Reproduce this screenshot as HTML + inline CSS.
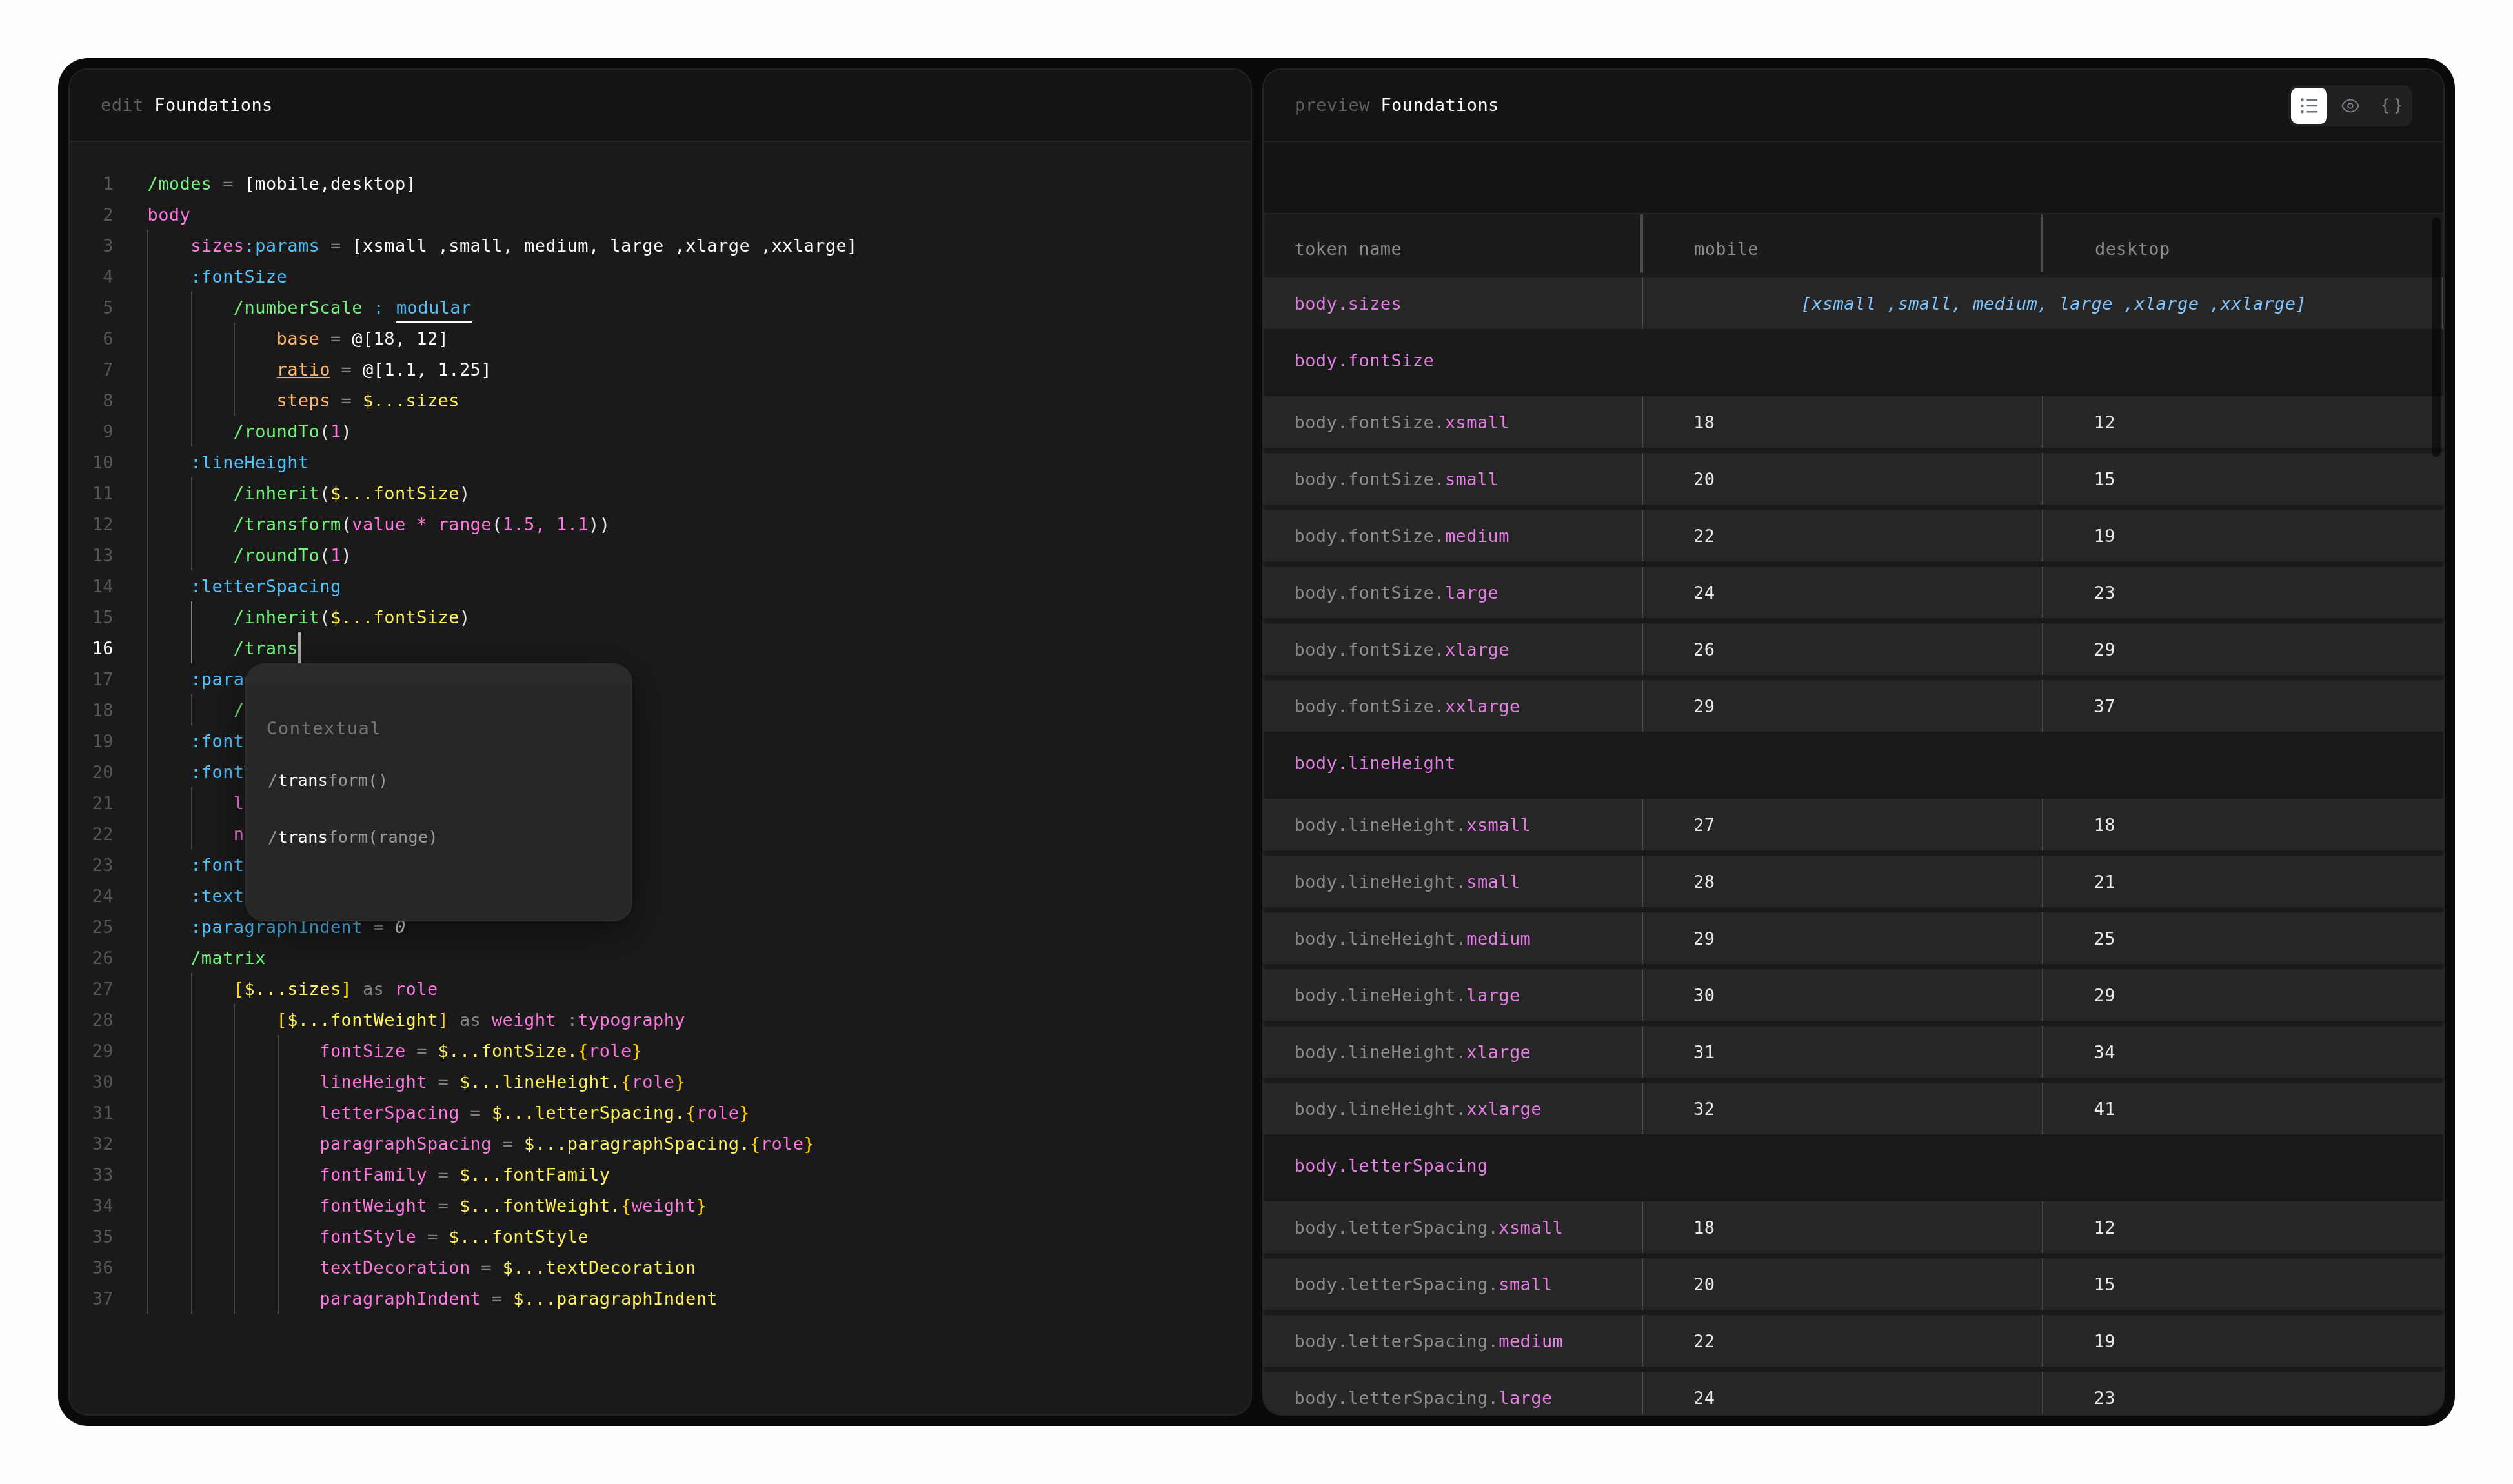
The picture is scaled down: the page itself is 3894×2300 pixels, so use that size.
<!DOCTYPE html>
<html lang="en"><head><meta charset="utf-8"><title>Foundations</title>
<style>
html,body{margin:0;padding:0}
body{width:3894px;height:2300px;background:#fefefe;overflow:hidden;position:relative;font-family:"DejaVu Sans Mono", "Liberation Mono", monospace;font-size:27.0px;letter-spacing:0.415px;line-height:48px;color:#fff;-webkit-font-smoothing:antialiased}
i{font-style:normal}
.frame{position:absolute;left:90px;top:90px;width:3714px;height:2120px;background:#0a0a0a;border-radius:46px;box-shadow:0 0 60px 10px rgba(0,0,0,.008)}
.panel{position:absolute;top:106px;height:2088px;box-sizing:border-box;border:2px solid #242424;border-radius:30px;overflow:hidden;background:#1a1a1a;will-change:transform}
.left{left:106px;width:1834px}
.right{left:1956px;width:1832px}
.hdr{position:absolute;left:0;top:0;right:0;height:110px;background:#141414;border-bottom:2px solid #242424}
.ttl{position:absolute;left:48px;top:31px;white-space:pre;color:#5f5f5f}
.ttl b{font-weight:normal;color:#fff}
.ln{position:absolute;left:0;right:0;height:48px}
.no{position:absolute;left:0;top:1px;width:68px;text-align:right;color:#555}
.no.act{color:#fff}
.cd{position:absolute;top:1px;white-space:pre}
.gd{position:absolute;top:0;width:2px;height:48px;background:#464646}
.ga{background:#858585}
.cur{position:absolute;left:354px;top:0;width:4px;height:48px;background:#b0b0b0}
.g{color:#72f47c}.p{color:#fc78e0}.b{color:#50c2fc}.o{color:#ffb46a}.y{color:#fdf05a}.w{color:#fff}.e{color:#828282}.a{color:#ffd400}.q{color:#e4e4ee}
.it{font-style:italic;color:#ddd}
.ul{text-decoration:underline;text-decoration-thickness:2px;text-underline-offset:2px}
.ub{display:inline-block;height:45px;border-bottom:2px solid #fff;vertical-align:top;position:relative;left:2px;padding-right:1px;margin-right:-1px}
.pop{position:absolute;left:272px;top:920px;width:600px;height:400px;box-sizing:border-box;border-radius:30px;background:#262626;border:2px solid #2c2c2c;box-shadow:0 16px 60px rgba(0,0,0,.5);overflow:hidden;font-size:25.12px}
.pop .top{position:absolute;left:0;right:0;top:0;height:30px;background:#2b2b2b}
.pop span{position:absolute;left:33px;white-space:pre}
.pop .h{left:31px}
.pop .h{color:#747474;font-size:27.0px;letter-spacing:1.565px}
.pop .s{color:#9a9a9a}.pop .s b{font-weight:normal;color:#fff}
/* right */
.band{position:absolute;left:0;right:0;top:112px;height:110px;background:#141414;border-bottom:2px solid #242424}
.th{position:absolute;left:0;right:0;top:224px;height:98px;background:#1b1b1b;color:#8c8c8c}
.th span{position:absolute;top:29.6px}
.th i{position:absolute;top:0;width:4px;height:90px;background:#4b4b4b}
.tr{position:absolute;left:0;right:0;height:80px;background:#262626;color:#e8e8e8}
.gr{position:absolute;left:0;right:0;height:104px;background:#191919}
.c1,.c2,.c3,.cs{position:absolute;top:17px;white-space:pre}
.gr .c1{top:25px}
.c1{left:47.5px}.c2{left:667px}.c3{left:1288px}
.tr .c2{left:666px}.tr .c3{left:1286.5px}
.cs{left:832.5px;font-style:italic;color:#84c4fa}
.m{color:#8c8c8c}.k{color:#e27fe2}
.vs{position:absolute;top:0;width:2px;height:100%;background:#4a4a4a}
.v1{left:586px}.v2{left:1206px}.v3{left:1826px}
.sb{position:absolute;left:1810px;top:228px;width:14px;height:372px;border-radius:7px;background:rgba(0,0,0,.53)}
.tg{position:absolute;left:1588px;top:24px;width:192px;height:64px;border-radius:14px;background:#212121}
.tg .on{position:absolute;left:4px;top:4px;width:56px;height:56px;border-radius:11px;background:#fff}
.tg svg{position:absolute;left:0;top:0}
</style></head><body>
<div class="frame"></div>
<div class="panel left">
<div class="hdr"><span class="ttl">edit <b>Foundations</b></span></div>
<div class="ln" style="top:152px"><span class="no">1</span><span class="cd" style="left:120.50px"><span class="g">/modes</span> <span class="e">=</span> <span class="w">[mobile,desktop]</span></span></div>
<div class="ln" style="top:200px"><span class="no">2</span><span class="cd" style="left:120.50px"><span class="p">body</span></span></div>
<div class="ln" style="top:248px"><span class="no">3</span><i class="gd" style="left:120px"></i><span class="cd" style="left:187.18px"><span class="p">sizes</span><span class="b">:params</span> <span class="e">=</span> <span class="w">[xsmall ,small, medium, large ,xlarge ,xxlarge]</span></span></div>
<div class="ln" style="top:296px"><span class="no">4</span><i class="gd" style="left:120px"></i><span class="cd" style="left:187.18px"><span class="b">:fontSize</span></span></div>
<div class="ln" style="top:344px"><span class="no">5</span><i class="gd" style="left:120px"></i><i class="gd" style="left:188px"></i><span class="cd" style="left:253.86px"><span class="g">/numberScale</span> <span class="b">:</span> <span class="b ub">modular</span></span></div>
<div class="ln" style="top:392px"><span class="no">6</span><i class="gd" style="left:120px"></i><i class="gd" style="left:188px"></i><i class="gd" style="left:254px"></i><span class="cd" style="left:320.54px"><span class="o">base</span> <span class="e">=</span> <span class="w">@[18, 12]</span></span></div>
<div class="ln" style="top:440px"><span class="no">7</span><i class="gd" style="left:120px"></i><i class="gd" style="left:188px"></i><i class="gd" style="left:254px"></i><span class="cd" style="left:320.54px"><span class="o ul">ratio</span> <span class="e">=</span> <span class="w">@[1.1, 1.25]</span></span></div>
<div class="ln" style="top:488px"><span class="no">8</span><i class="gd" style="left:120px"></i><i class="gd" style="left:188px"></i><i class="gd" style="left:254px"></i><span class="cd" style="left:320.54px"><span class="o">steps</span> <span class="e">=</span> <span class="y">$...sizes</span></span></div>
<div class="ln" style="top:536px"><span class="no">9</span><i class="gd" style="left:120px"></i><i class="gd" style="left:188px"></i><span class="cd" style="left:253.86px"><span class="g">/roundTo</span><span class="q">(</span><span class="p">1</span><span class="q">)</span></span></div>
<div class="ln" style="top:584px"><span class="no">10</span><i class="gd" style="left:120px"></i><span class="cd" style="left:187.18px"><span class="b">:lineHeight</span></span></div>
<div class="ln" style="top:632px"><span class="no">11</span><i class="gd" style="left:120px"></i><i class="gd" style="left:188px"></i><span class="cd" style="left:253.86px"><span class="g">/inherit</span><span class="q">(</span><span class="y">$...fontSize</span><span class="q">)</span></span></div>
<div class="ln" style="top:680px"><span class="no">12</span><i class="gd" style="left:120px"></i><i class="gd" style="left:188px"></i><span class="cd" style="left:253.86px"><span class="g">/transform</span><span class="q">(</span><span class="p">value * range</span><span class="q">(</span><span class="p">1.5, 1.1</span><span class="q">))</span></span></div>
<div class="ln" style="top:728px"><span class="no">13</span><i class="gd" style="left:120px"></i><i class="gd" style="left:188px"></i><span class="cd" style="left:253.86px"><span class="g">/roundTo</span><span class="q">(</span><span class="p">1</span><span class="q">)</span></span></div>
<div class="ln" style="top:776px"><span class="no">14</span><i class="gd" style="left:120px"></i><span class="cd" style="left:187.18px"><span class="b">:letterSpacing</span></span></div>
<div class="ln" style="top:824px"><span class="no">15</span><i class="gd" style="left:120px"></i><i class="gd ga" style="left:188px"></i><span class="cd" style="left:253.86px"><span class="g">/inherit</span><span class="q">(</span><span class="y">$...fontSize</span><span class="q">)</span></span></div>
<div class="ln" style="top:872px"><span class="no act">16</span><i class="gd" style="left:120px"></i><i class="gd ga" style="left:188px"></i><span class="cd" style="left:253.86px"><span class="g">/trans</span></span><i class="cur"></i></div>
<div class="ln" style="top:920px"><span class="no">17</span><i class="gd" style="left:120px"></i><span class="cd" style="left:187.18px"><span class="b">:parag</span></span></div>
<div class="ln" style="top:968px"><span class="no">18</span><i class="gd" style="left:120px"></i><i class="gd" style="left:188px"></i><span class="cd" style="left:253.86px"><span class="g">/</span></span></div>
<div class="ln" style="top:1016px"><span class="no">19</span><i class="gd" style="left:120px"></i><span class="cd" style="left:187.18px"><span class="b">:font</span></span></div>
<div class="ln" style="top:1064px"><span class="no">20</span><i class="gd" style="left:120px"></i><span class="cd" style="left:187.18px"><span class="b">:fontW</span></span></div>
<div class="ln" style="top:1112px"><span class="no">21</span><i class="gd" style="left:120px"></i><i class="gd" style="left:188px"></i><span class="cd" style="left:253.86px"><span class="p">l</span></span></div>
<div class="ln" style="top:1160px"><span class="no">22</span><i class="gd" style="left:120px"></i><i class="gd" style="left:188px"></i><span class="cd" style="left:253.86px"><span class="p">n</span></span></div>
<div class="ln" style="top:1208px"><span class="no">23</span><i class="gd" style="left:120px"></i><span class="cd" style="left:187.18px"><span class="b">:fontS</span></span></div>
<div class="ln" style="top:1256px"><span class="no">24</span><i class="gd" style="left:120px"></i><span class="cd" style="left:187.18px"><span class="b">:text</span></span></div>
<div class="ln" style="top:1304px"><span class="no">25</span><i class="gd" style="left:120px"></i><span class="cd" style="left:187.18px"><span class="b">:paragraphIndent</span> <span class="e">=</span> <span class="w it">0</span></span></div>
<div class="ln" style="top:1352px"><span class="no">26</span><i class="gd" style="left:120px"></i><span class="cd" style="left:187.18px"><span class="g">/matrix</span></span></div>
<div class="ln" style="top:1400px"><span class="no">27</span><i class="gd" style="left:120px"></i><i class="gd" style="left:188px"></i><span class="cd" style="left:253.86px"><span class="a">[</span><span class="y">$...sizes</span><span class="a">]</span> <span class="e">as</span> <span class="p">role</span></span></div>
<div class="ln" style="top:1448px"><span class="no">28</span><i class="gd" style="left:120px"></i><i class="gd" style="left:188px"></i><i class="gd" style="left:254px"></i><span class="cd" style="left:320.54px"><span class="a">[</span><span class="y">$...fontWeight</span><span class="a">]</span> <span class="e">as</span> <span class="p">weight</span> <span class="e">:</span><span class="p">typography</span></span></div>
<div class="ln" style="top:1496px"><span class="no">29</span><i class="gd" style="left:120px"></i><i class="gd" style="left:188px"></i><i class="gd" style="left:254px"></i><i class="gd" style="left:322px"></i><span class="cd" style="left:387.22px"><span class="p">fontSize</span> <span class="e">=</span> <span class="y">$...fontSize.</span><span class="a">{</span><span class="p">role</span><span class="a">}</span></span></div>
<div class="ln" style="top:1544px"><span class="no">30</span><i class="gd" style="left:120px"></i><i class="gd" style="left:188px"></i><i class="gd" style="left:254px"></i><i class="gd" style="left:322px"></i><span class="cd" style="left:387.22px"><span class="p">lineHeight</span> <span class="e">=</span> <span class="y">$...lineHeight.</span><span class="a">{</span><span class="p">role</span><span class="a">}</span></span></div>
<div class="ln" style="top:1592px"><span class="no">31</span><i class="gd" style="left:120px"></i><i class="gd" style="left:188px"></i><i class="gd" style="left:254px"></i><i class="gd" style="left:322px"></i><span class="cd" style="left:387.22px"><span class="p">letterSpacing</span> <span class="e">=</span> <span class="y">$...letterSpacing.</span><span class="a">{</span><span class="p">role</span><span class="a">}</span></span></div>
<div class="ln" style="top:1640px"><span class="no">32</span><i class="gd" style="left:120px"></i><i class="gd" style="left:188px"></i><i class="gd" style="left:254px"></i><i class="gd" style="left:322px"></i><span class="cd" style="left:387.22px"><span class="p">paragraphSpacing</span> <span class="e">=</span> <span class="y">$...paragraphSpacing.</span><span class="a">{</span><span class="p">role</span><span class="a">}</span></span></div>
<div class="ln" style="top:1688px"><span class="no">33</span><i class="gd" style="left:120px"></i><i class="gd" style="left:188px"></i><i class="gd" style="left:254px"></i><i class="gd" style="left:322px"></i><span class="cd" style="left:387.22px"><span class="p">fontFamily</span> <span class="e">=</span> <span class="y">$...fontFamily</span></span></div>
<div class="ln" style="top:1736px"><span class="no">34</span><i class="gd" style="left:120px"></i><i class="gd" style="left:188px"></i><i class="gd" style="left:254px"></i><i class="gd" style="left:322px"></i><span class="cd" style="left:387.22px"><span class="p">fontWeight</span> <span class="e">=</span> <span class="y">$...fontWeight.</span><span class="a">{</span><span class="p">weight</span><span class="a">}</span></span></div>
<div class="ln" style="top:1784px"><span class="no">35</span><i class="gd" style="left:120px"></i><i class="gd" style="left:188px"></i><i class="gd" style="left:254px"></i><i class="gd" style="left:322px"></i><span class="cd" style="left:387.22px"><span class="p">fontStyle</span> <span class="e">=</span> <span class="y">$...fontStyle</span></span></div>
<div class="ln" style="top:1832px"><span class="no">36</span><i class="gd" style="left:120px"></i><i class="gd" style="left:188px"></i><i class="gd" style="left:254px"></i><i class="gd" style="left:322px"></i><span class="cd" style="left:387.22px"><span class="p">textDecoration</span> <span class="e">=</span> <span class="y">$...textDecoration</span></span></div>
<div class="ln" style="top:1880px"><span class="no">37</span><i class="gd" style="left:120px"></i><i class="gd" style="left:188px"></i><i class="gd" style="left:254px"></i><i class="gd" style="left:322px"></i><span class="cd" style="left:387.22px"><span class="p">paragraphIndent</span> <span class="e">=</span> <span class="y">$...paragraphIndent</span></span></div>
<div class="pop"><div class="top"></div>
<span class="h" style="top:74.5px">Contextual</span>
<span class="s" style="top:156.2px">/<b>trans</b>form()</span>
<span class="s" style="top:244.3px">/<b>trans</b>form(range)</span>
</div>
</div>
<div class="panel right">
<div class="hdr"><span class="ttl">preview <b>Foundations</b></span>
<div class="tg"><div class="on"></div><svg width="192" height="64" viewBox="0 0 192 64" fill="none" stroke-linecap="round" stroke-linejoin="round">
<g fill="#6b7280"><circle cx="21.4" cy="22.7" r="2.35"/><circle cx="21.4" cy="32" r="2.35"/><circle cx="21.4" cy="41.2" r="2.35"/></g>
<g stroke="#6b7280" stroke-width="2.5"><path d="M29.4 22.7H44M29.4 32H44M29.4 41.2H44"/></g>
<g stroke="#7b818d" stroke-width="1.5" transform="translate(81 17) scale(1.25)"><path d="M2.036 12.322a1.012 1.012 0 0 1 0-.639C3.423 7.51 7.36 4.5 12 4.5c4.638 0 8.573 3.007 9.963 7.178.07.207.07.431 0 .639C20.577 16.49 16.64 19.500 12 19.500c-4.638 0-8.573-3.007-9.963-7.178z"/><circle cx="12" cy="12" r="3"/></g>
<g stroke="#7b818d" stroke-width="2"><path d="M153.500 21.2C150.500 21.2 149.800 22.500 149.800 24.800V28.300C149.800 30.500 148.800 32 146.800 32C148.800 32 149.800 33.500 149.800 35.700V39.200C149.800 41.500 150.500 42.800 153.500 42.800"/><path d="M166.500 21.2C169.500 21.2 170.200 22.500 170.200 24.800V28.300C170.200 30.500 171.200 32 173.200 32C171.200 32 170.200 33.500 170.200 35.700V39.200C170.200 41.500 169.500 42.800 166.500 42.800"/></g>
</svg></div></div>
<div class="band"></div>
<div class="th"><span class="c1" style="top:29.6px">token name</span><i style="left:584px"></i><span class="c2" style="top:29.6px">mobile</span><i style="left:1204px"></i><span class="c3" style="top:29.6px">desktop</span></div>
<div class="tr" style="top:322px"><span class="c1 k">body.sizes</span><i class="vs v1"></i><span class="cs">[xsmall ,small, medium, large ,xlarge ,xxlarge]</span><i class="vs v3"></i></div>
<div class="gr" style="top:402px"><span class="c1 k">body.fontSize</span></div>
<div class="tr" style="top:506px"><span class="c1"><span class="m">body.fontSize.</span><span class="k">xsmall</span></span><i class="vs v1"></i><span class="c2">18</span><i class="vs v2"></i><span class="c3">12</span></div>
<div class="tr" style="top:594px"><span class="c1"><span class="m">body.fontSize.</span><span class="k">small</span></span><i class="vs v1"></i><span class="c2">20</span><i class="vs v2"></i><span class="c3">15</span></div>
<div class="tr" style="top:682px"><span class="c1"><span class="m">body.fontSize.</span><span class="k">medium</span></span><i class="vs v1"></i><span class="c2">22</span><i class="vs v2"></i><span class="c3">19</span></div>
<div class="tr" style="top:770px"><span class="c1"><span class="m">body.fontSize.</span><span class="k">large</span></span><i class="vs v1"></i><span class="c2">24</span><i class="vs v2"></i><span class="c3">23</span></div>
<div class="tr" style="top:858px"><span class="c1"><span class="m">body.fontSize.</span><span class="k">xlarge</span></span><i class="vs v1"></i><span class="c2">26</span><i class="vs v2"></i><span class="c3">29</span></div>
<div class="tr" style="top:946px"><span class="c1"><span class="m">body.fontSize.</span><span class="k">xxlarge</span></span><i class="vs v1"></i><span class="c2">29</span><i class="vs v2"></i><span class="c3">37</span></div>
<div class="gr" style="top:1026px"><span class="c1 k">body.lineHeight</span></div>
<div class="tr" style="top:1130px"><span class="c1"><span class="m">body.lineHeight.</span><span class="k">xsmall</span></span><i class="vs v1"></i><span class="c2">27</span><i class="vs v2"></i><span class="c3">18</span></div>
<div class="tr" style="top:1218px"><span class="c1"><span class="m">body.lineHeight.</span><span class="k">small</span></span><i class="vs v1"></i><span class="c2">28</span><i class="vs v2"></i><span class="c3">21</span></div>
<div class="tr" style="top:1306px"><span class="c1"><span class="m">body.lineHeight.</span><span class="k">medium</span></span><i class="vs v1"></i><span class="c2">29</span><i class="vs v2"></i><span class="c3">25</span></div>
<div class="tr" style="top:1394px"><span class="c1"><span class="m">body.lineHeight.</span><span class="k">large</span></span><i class="vs v1"></i><span class="c2">30</span><i class="vs v2"></i><span class="c3">29</span></div>
<div class="tr" style="top:1482px"><span class="c1"><span class="m">body.lineHeight.</span><span class="k">xlarge</span></span><i class="vs v1"></i><span class="c2">31</span><i class="vs v2"></i><span class="c3">34</span></div>
<div class="tr" style="top:1570px"><span class="c1"><span class="m">body.lineHeight.</span><span class="k">xxlarge</span></span><i class="vs v1"></i><span class="c2">32</span><i class="vs v2"></i><span class="c3">41</span></div>
<div class="gr" style="top:1650px"><span class="c1 k">body.letterSpacing</span></div>
<div class="tr" style="top:1754px"><span class="c1"><span class="m">body.letterSpacing.</span><span class="k">xsmall</span></span><i class="vs v1"></i><span class="c2">18</span><i class="vs v2"></i><span class="c3">12</span></div>
<div class="tr" style="top:1842px"><span class="c1"><span class="m">body.letterSpacing.</span><span class="k">small</span></span><i class="vs v1"></i><span class="c2">20</span><i class="vs v2"></i><span class="c3">15</span></div>
<div class="tr" style="top:1930px"><span class="c1"><span class="m">body.letterSpacing.</span><span class="k">medium</span></span><i class="vs v1"></i><span class="c2">22</span><i class="vs v2"></i><span class="c3">19</span></div>
<div class="tr" style="top:2018px"><span class="c1"><span class="m">body.letterSpacing.</span><span class="k">large</span></span><i class="vs v1"></i><span class="c2">24</span><i class="vs v2"></i><span class="c3">23</span></div>
<div class="sb"></div>
</div>
</body></html>
